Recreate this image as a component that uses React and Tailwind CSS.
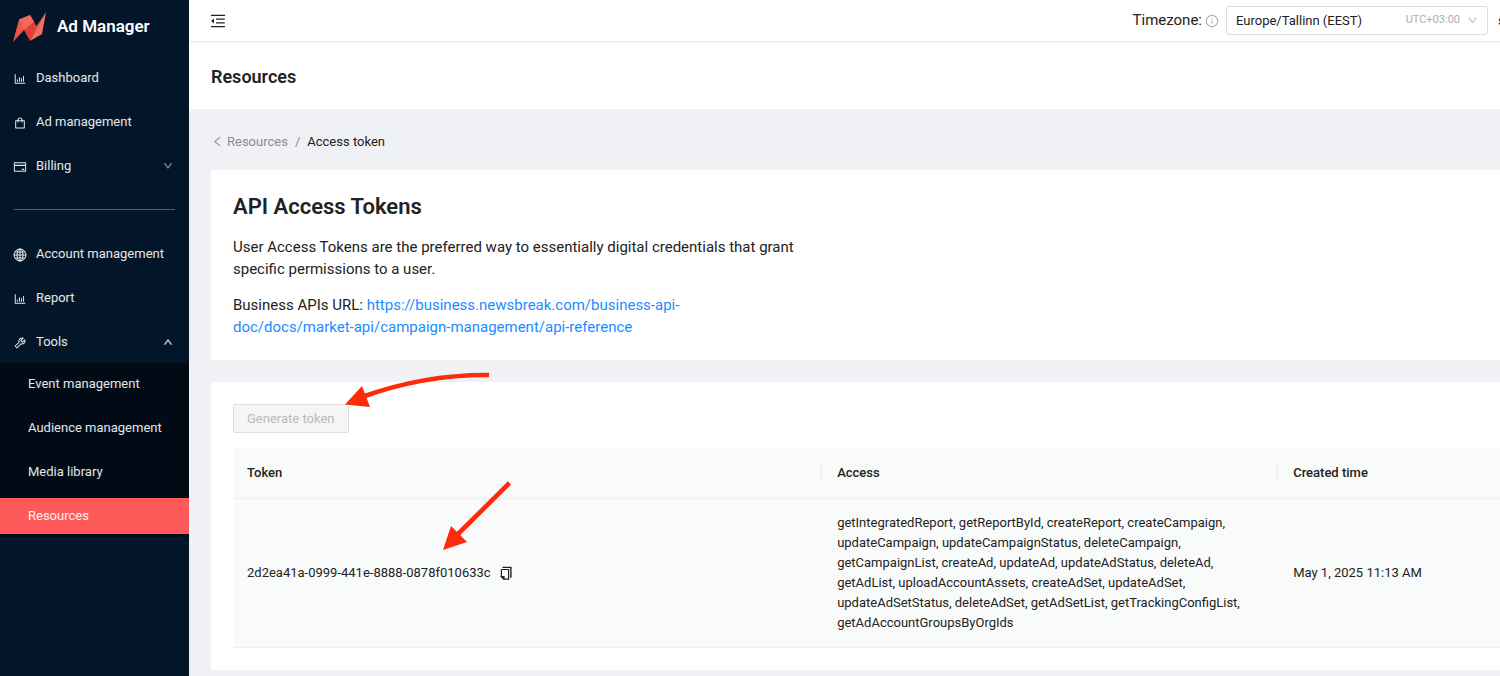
import {
  AiOutlineBarChart,
  AiOutlineCreditCard,
  AiOutlineDown,
  AiOutlineInfoCircle,
  AiOutlineLeft,
  AiOutlineMenuFold,
  AiOutlineShopping,
  AiOutlineTool,
  AiOutlineUp,
} from "react-icons/ai";

const mainMenu = [
  { label: "Dashboard", icon: AiOutlineBarChart },
  { label: "Ad management", icon: AiOutlineShopping },
  { label: "Billing", icon: AiOutlineCreditCard, arrow: "down" },
];

const accountMenu = [
  { label: "Account management", icon: GlobeIcon },
  { label: "Report", icon: AiOutlineBarChart },
  { label: "Tools", icon: AiOutlineTool, arrow: "up" },
];

const toolsMenu = ["Event management", "Audience management", "Media library", "Resources"];

const tokens = [
  {
    token: "2d2ea41a-0999-441e-8888-0878f010633c",
    access: [
      "getIntegratedReport",
      "getReportById",
      "createReport",
      "createCampaign",
      "updateCampaign",
      "updateCampaignStatus",
      "deleteCampaign",
      "getCampaignList",
      "createAd",
      "updateAd",
      "updateAdStatus",
      "deleteAd",
      "getAdList",
      "uploadAccountAssets",
      "createAdSet",
      "updateAdSet",
      "updateAdSetStatus",
      "deleteAdSet",
      "getAdSetList",
      "getTrackingConfigList",
      "getAdAccountGroupsByOrgIds",
    ],
    created: "May 1, 2025 11:13 AM",
  },
];

function Logo() {
  return (
    <svg viewBox="0 0 34 30" className="w-[34px] h-[30px] shrink-0" aria-hidden="true">
      <path d="M6 7.5 12 17 0 30Z" fill="#ee5548" />
      <path d="M6 7.5 17 3 24 15 17 29 11 18Z" fill="#e23f32" />
      <path d="M6 7.5 17 3 21 9.5 11 18Z" fill="#f2685c" />
      <path d="M33 0 23 15 17 29Z" fill="#ef5a4e" />
      <path d="M33 0 29 22 17 29Z" fill="#f66f63" />
    </svg>
  );
}

function GlobeIcon({ size, className }) {
  return (
    <svg
      viewBox="0 0 14 14"
      fill="none"
      stroke="currentColor"
      width={size}
      height={size}
      className={className}
      aria-hidden="true"
    >
      <circle cx="7" cy="7" r="6" />
      <ellipse cx="7" cy="7" rx="3" ry="6" />
      <path d="M7 1v12M1 7h12M2 4h10M2 10h10" />
    </svg>
  );
}

function CopyIcon() {
  return (
    <svg
      viewBox="0 0 14 14"
      fill="none"
      stroke="currentColor"
      strokeWidth="1.2"
      className="size-[14px]"
      aria-hidden="true"
    >
      <path d="M3.5 1.4h8.4v10.4" strokeWidth="1.4" />
      <path d="M2.4 3.5h7.2v9.7H4.9L2.4 10.7Z" />
      <path d="M2.4 10.6h2.6v2.6Z" />
    </svg>
  );
}

function MenuItem({ item }) {
  const Icon = item.icon;

  return (
    <li>
      <a href="#" className="flex items-center h-9 pl-[13px] pr-4 text-[13px] text-white/90">
        <Icon size={14} className="mr-[9px] mt-0.5 shrink-0" />
        <span className="flex-1">{item.label}</span>
        {item.arrow === "down" && <AiOutlineDown size={10} strokeWidth={50} className="opacity-60" />}
        {item.arrow === "up" && <AiOutlineUp size={10} strokeWidth={50} />}
      </a>
    </li>
  );
}

function Sidebar() {
  return (
    <aside className="w-[189px] shrink-0 bg-[#031529]">
      <div className="flex items-center gap-2.5 h-[54px] pl-[13px] text-white">
        <Logo />
        <span className="text-[17px] font-semibold">Ad Manager</span>
      </div>
      <nav>
        <ul className="flex flex-col gap-2 pt-1.5">
          {mainMenu.map((item) => (
            <MenuItem key={item.label} item={item} />
          ))}
        </ul>
        <hr className="mx-[14px] mt-[25px] mb-[26px] border-[#4f5c69]" />
        <ul className="flex flex-col gap-2">
          {accountMenu.map((item) => (
            <MenuItem key={item.label} item={item} />
          ))}
        </ul>
        <ul className="flex flex-col gap-2 mt-[3px] pt-[3px] pb-[3px] bg-[#010a15]">
          {toolsMenu.map((label) => (
            <li key={label}>
              <a
                href="#"
                className={`flex items-center h-9 pl-7 text-[13px] text-white/90 ${
                  label === "Resources" ? "bg-[#ff5a5a]" : ""
                }`}
              >
                {label}
              </a>
            </li>
          ))}
        </ul>
      </nav>
    </aside>
  );
}

function TopBar() {
  return (
    <header className="flex items-center h-[43px] pl-5 bg-white border-b-2 border-[#f0f1f4] overflow-hidden">
      <button type="button" aria-label="Collapse menu">
        <AiOutlineMenuFold size={18} />
      </button>
      <div className="flex items-center ml-auto shrink-0">
        <label htmlFor="timezone" className="text-[15px]">
          Timezone:
        </label>
        <AiOutlineInfoCircle size={14} className="ml-[3px] text-[#aaaaaa]" />
        <div className="relative ml-[7px]">
          <select
            id="timezone"
            className="appearance-none block w-[262px] h-[29px] pl-[9px] text-[13px] bg-white border border-[#dcdddf] rounded-[3px]"
          >
            <option>Europe/Tallinn (EEST)</option>
          </select>
          <div className="absolute inset-y-0 right-2.5 flex items-center gap-[7px] text-[#aeaeae] pointer-events-none">
            <span className="text-[11px]">UTC+03:00</span>
            <AiOutlineDown size={11} />
          </div>
        </div>
        <span className="w-3 pl-2.5 overflow-hidden text-[13px]">s</span>
      </div>
    </header>
  );
}

// Hand-drawn pointers laid over the token card
function Pointers() {
  return (
    <svg
      viewBox="0 0 300 190"
      className="absolute left-[129px] -top-3 w-[300px] h-[190px] pointer-events-none"
      aria-hidden="true"
    >
      <g fill="none" stroke="#fc2b0c" strokeWidth="4.6">
        <path d="M149 5Q84 4.500 22 27" />
        <path d="M169.500 113 118 164" />
      </g>
      <g fill="#fc2b0c">
        <path d="M5 34.500 22 16 30 37Z" />
        <path d="M103 180 111 156 127 172Z" />
      </g>
    </svg>
  );
}

function TokenTable() {
  return (
    <table className="w-full table-fixed text-[13px] leading-5 text-left bg-[#f9fbfa]">
      <colgroup>
        <col className="w-[46.5%]" />
        <col className="w-[456px]" />
        <col />
      </colgroup>
      <thead>
        <tr className="h-[50px] border-b border-[#efefef]">
          <th className="p-0 font-medium">
            <div className="px-[14px] border-r border-[#ebecec]">Token</div>
          </th>
          <th className="p-0 font-medium">
            <div className="px-[15px] border-r border-[#ebecec]">Access</div>
          </th>
          <th className="px-[15px] py-0 font-medium">Created time</th>
        </tr>
      </thead>
      <tbody>
        {tokens.map((row) => (
          <tr key={row.token} className="border-b border-[#efefef]">
            <td className="px-[14px]">
              <div className="flex items-center gap-2">
                {row.token}
                <button type="button" aria-label="Copy token">
                  <CopyIcon />
                </button>
              </div>
            </td>
            <td className="px-[15px] py-[14px]">{row.access.join(", ")}</td>
            <td className="px-[15px]">{row.created}</td>
          </tr>
        ))}
      </tbody>
    </table>
  );
}

export default function App() {
  return (
    <div className="flex min-h-screen overflow-hidden bg-[#f0f1f5] font-['Roboto',sans-serif] text-[#222222]">
      <Sidebar />
      <div className="flex-1 min-w-0">
        <TopBar />
        <div className="flex items-center h-[66px] px-[22px] bg-white">
          <h1 className="text-[18px] font-semibold">Resources</h1>
        </div>

        <main className="pl-[22px]">
          <nav aria-label="Breadcrumb" className="flex items-center h-[61px] pt-1 text-[13px]">
            <a href="#" className="flex items-center gap-[3px] text-[#8b8c8f]">
              <AiOutlineLeft size={13} />
              Resources
            </a>
            <span className="mx-[7px] text-[#8b8c8f]">/</span>
            <span>Access token</span>
          </nav>

          <section className="px-[22px] pt-[22px] pb-[22px] bg-white rounded-l-xs">
            <h2 className="text-[22px] leading-[30px] font-semibold">API Access Tokens</h2>
            <div className="text-[15px] leading-[22px]">
              <p className="mt-[14px] max-w-[570px]">
                User Access Tokens are the preferred way to essentially digital credentials that grant specific
                permissions to a user.
              </p>
              <p className="mt-[14px] max-w-[550px]">
                Business APIs URL:{" "}
                <a href="#" className="text-[#1b8cff]">
                  https://business.newsbreak.com/business-api-doc/docs/market-api/campaign-management/api-reference
                </a>
              </p>
            </div>
          </section>

          <section className="relative mt-[22px] pl-[22px] pt-[22px] pb-[22px] bg-white rounded-l-xs">
            <button
              type="button"
              disabled
              className="block h-[29px] px-[13px] mb-[15px] text-[13px] text-[#b9bbba] bg-[#f4f6f5] border border-[#dcdddc] rounded-xs"
            >
              Generate token
            </button>
            <TokenTable />
            <Pointers />
          </section>
        </main>
      </div>
    </div>
  );
}
